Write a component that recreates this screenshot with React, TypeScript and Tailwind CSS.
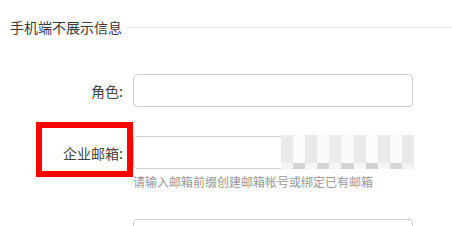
import React from "react";

const mosaicTop = ["#ebebeb","#fbfbfb","#e9e9e9","#fafafa","#ececec","#f9f9f9","#eaeaea","#fbfbfb","#ebebeb","#fafafa","#e8e8e8"];
const mosaicBot = ["#f4f4f4","#d2d2d2","#f6f6f6","#d4d4d4","#f5f5f5","#d3d3d3","#f6f6f6","#d1d1d1","#f4f4f4","#d6d6d6","#f2f2f2"];

export default function App() {
  return (
    <div
      className="relative w-[452px] h-[226px] overflow-hidden bg-white text-[#333]"
      style={{ fontFamily: '"Noto Sans CJK SC", "Noto Sans", sans-serif' }}
    >
      <div className="flex items-center pl-[10px] pt-[19px]">
        <span className="text-[14px] leading-[16px] text-[#3a3a3a]">手机端不展示信息</span>
        <div className="ml-[5px] h-px flex-1 bg-[#e6e6e6]" />
      </div>

      <div className="mt-[39px] flex items-center">
        <div className="w-[123px] text-right text-[14px] leading-[16px] text-[#444]">角色:</div>
        <div className="ml-[10px] h-[33px] w-[280px] rounded-[4px] border border-[#cfcfcf]" />
      </div>

      <div className="mt-[29px] flex items-center">
        <div className="w-[123px] text-right text-[14px] leading-[16px] text-[#444]">企业邮箱:</div>
        <div className="relative ml-[10px] flex h-[33px] w-[280px] rounded-[4px] border border-[#cfcfcf]">
          <div className="absolute left-[147px] top-[-2px] flex h-[35px] w-[133px] flex-col">
            <div className="flex h-[28px]">
              {mosaicTop.map((c, i) => (
                <div key={i} className="flex-1" style={{ background: c }} />
              ))}
            </div>
            <div className="flex h-[6px]">
              {mosaicBot.map((c, i) => (
                <div key={i} className="flex-1" style={{ background: c }} />
              ))}
            </div>
          </div>
        </div>
      </div>
      <div className="ml-[133px] mt-[6px] text-[12px] leading-[14px] text-[#999]">
        请输入邮箱前缀创建邮箱帐号或绑定已有邮箱
      </div>

      <div className="mt-[30px] flex items-center">
        <div className="w-[123px]" />
        <div className="ml-[10px] h-[33px] w-[280px] rounded-[4px] border border-[#cfcfcf]" />
      </div>

      <div className="absolute left-[36px] top-[122px] h-[55px] w-[97px] border-[6px] border-[#ff0000]" />
    </div>
  );
}
